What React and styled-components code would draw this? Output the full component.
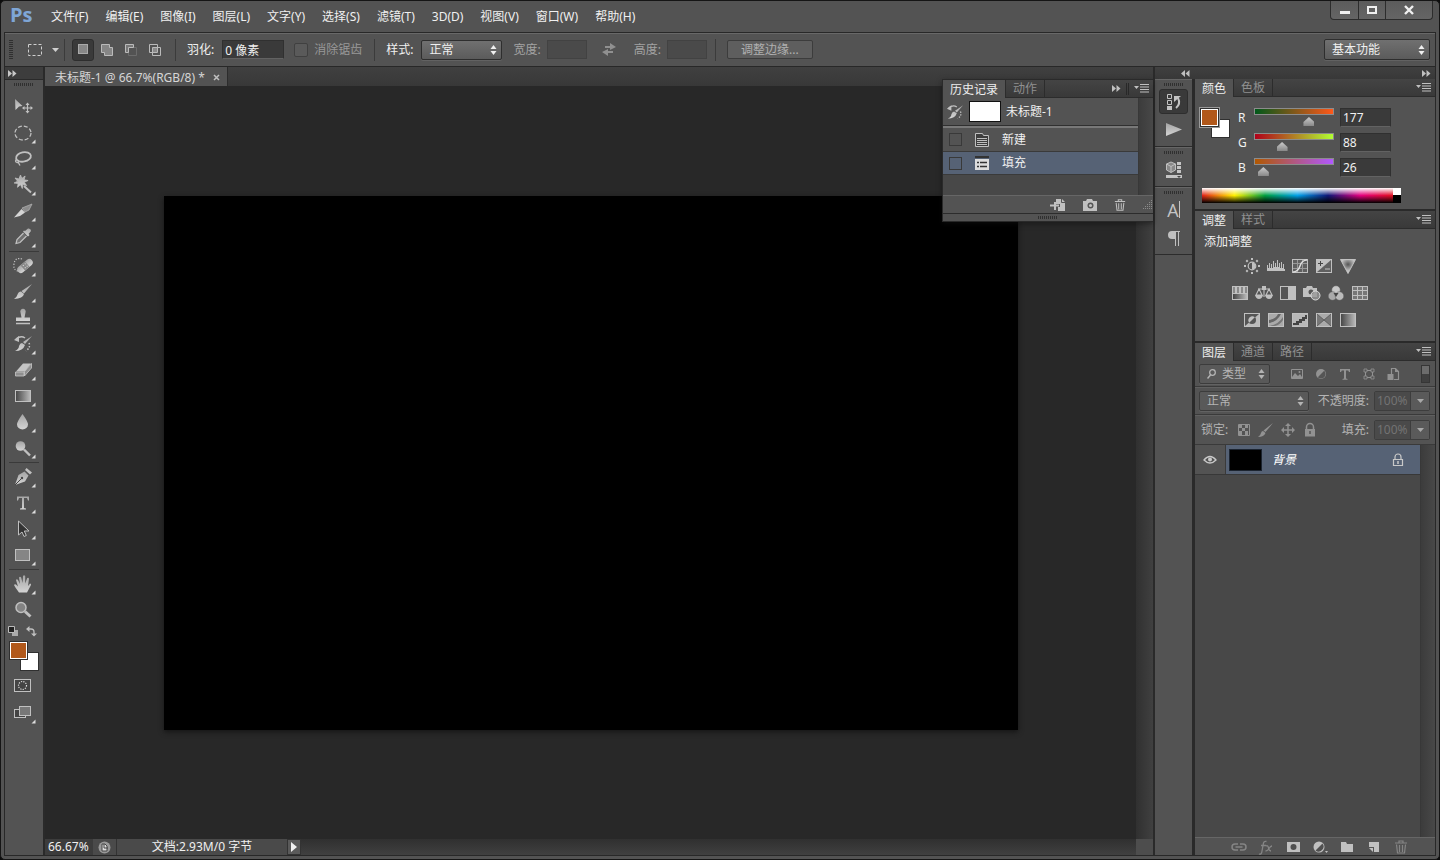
import React, { useState } from 'react';
import styled, { createGlobalStyle, css } from 'styled-components';

const MENUS = ['文件(F)', '编辑(E)', '图像(I)', '图层(L)', '文字(Y)', '选择(S)', '滤镜(T)', '3D(D)', '视图(V)', '窗口(W)', '帮助(H)'];

const SILVER = 'url(#silver)';
const LINE = '#c0c0c0';

const historyBrush = (
  <>
    <path d="M21 5 L14 13 L12 11 Z M11 12 L14 14 Q12 20 4 20 Q8 18 8 15 Q9 12 11 12Z" fill={SILVER} />
    <path d="M5 8 Q10 4 14 7" fill="none" stroke={LINE} strokeWidth="1.5" />
    <path d="M3 9 L8 5 L8 11Z" fill={LINE} />
    <path d="M18 12 Q20 16 15 20" fill="none" stroke={LINE} strokeWidth="1.5" strokeDasharray="1.5 1.5" />
  </>
);

const TOOLS = [
  [
    { name: '移动工具', flat: true, art: <><path d="M4 5 L11.5 12 L8 12.5 L4.5 16Z" fill={SILVER} /><path d="M16.5 9.5v9M12 14h9" stroke={LINE} strokeWidth="1.2" /><path d="M16.5 8.500l2 2.500h-4zM16.500 19.500l2-2.500h-4zM11 14l2.500-2v4zM22 14l-2.500-2v4z" fill={LINE} /></> },
    { name: '椭圆选框工具', art: <ellipse cx="12" cy="13" rx="8" ry="7" fill="none" stroke={LINE} strokeWidth="1.3" strokeDasharray="4 2" /> },
    { name: '套索工具', art: <><ellipse cx="12.500" cy="11" rx="7.500" ry="4.700" transform="rotate(-12 12 11)" fill="none" stroke={LINE} strokeWidth="1.8" /><path d="M6 13 Q3 15 6 16.500 Q9 17 7 14 M7 16 L9 19.500" fill="none" stroke={LINE} strokeWidth="1.300" /></> },
    { name: '魔棒工具', art: <><path d="M9.500 3l1.300 3.500 3.300-2.500-1 3.800 4 .7-3.800 1.700 2.300 3.300-3.800-1-.5 4-1.800-3.800-3 2.600.6-3.800-4-.5 3.500-1.800-2.600-3.200 3.900 1z" fill={SILVER} stroke="#bdbdbd" strokeWidth=".8" /><path d="M13 14l7 6.500" stroke={LINE} strokeWidth="2" /></> },
    { name: '切片工具', art: <><path d="M11 10L21 6L18 12L14 14Z" fill="#8b8b8b" stroke="#b5b5b5" strokeWidth=".7" /><path d="M10.500 11L14 14.500L9 18L3 19.500Z" fill="#d4d4d4" /></> },
    { name: '吸管工具', art: <><path d="M14 7L17 4.500Q20 4 20 7L17.500 10L18.500 11L17 12.500L12 7.500L13 6.500Z" fill={SILVER} /><path d="M12.500 9L6 15.500L5 19.500L9 18.500L15.500 12" fill="#707070" stroke={LINE} strokeWidth="1.200" /></> },
  ],
  [
    { name: '污点修复画笔工具', art: <><g transform="rotate(-40 14 13)"><rect x="5" y="9.500" width="18" height="7" rx="3.500" fill={SILVER} /><rect x="11" y="9.500" width="6" height="7" fill="#888" /><path d="M12.500 11.500h1M15 11.500h1M12.500 14.500h1M15 14.500h1" stroke="#e0e0e0" strokeWidth="1" /></g><path d="M11 6Q4 4 3 11Q2 17 7 18" fill="none" stroke={LINE} strokeWidth="1.200" strokeDasharray="1.200 1.500" /></> },
    { name: '画笔工具', art: <path d="M21 5L13 14.500L10.500 12Z M10 12.500L13 15Q12 19.500 3 20Q6 18 6.500 15.500Q7.500 12.500 10 12.500Z" fill={SILVER} /> },
    { name: '仿制图章工具', art: <><path d="M9.500 7.500a2.700 2.700 0 1 1 5 0L13.500 12.500H19V16H5v-3.500h5.500z" fill={SILVER} /><path d="M5 18.500h14" stroke={LINE} strokeWidth="1.500" /></> },
    { name: '历史记录画笔工具', art: historyBrush },
    { name: '橡皮擦工具', art: <><path d="M12 6.500h8l-6 8H5z" fill="#c4c4c4" /><path d="M4.500 15h8.500v4H4.500zM13.500 14.500L20.500 6.500v4.500l-7 8z" fill="#8f8f8f" stroke="#c8c8c8" strokeWidth=".8" /></> },
    { name: '渐变工具', art: <rect x="4.500" y="7.500" width="15" height="11" fill="url(#fade)" stroke={LINE} /> },
    { name: '模糊工具', art: <path d="M11.500 5Q17 12.500 17 15.500a5.500 5 0 0 1-11 0Q6 12.500 11.500 5Z" fill={SILVER} /> },
    { name: '减淡工具', art: <><circle cx="9.500" cy="11" r="4.800" fill={SILVER} /><path d="M13 14.500l6 6" stroke={LINE} strokeWidth="2.400" /></> },
  ],
  [
    { name: '钢笔工具', art: <><path d="M15.500 4L21 8.500l-2 2-5-4.500z" fill={LINE} /><path d="M13.500 7.500L17.500 11.500 14 17.500 4 21 7.500 11Z" fill={SILVER} /><path d="M4 21l6-6" stroke="#444" /><circle cx="11" cy="14" r="1.200" fill="#444" /></> },
    { name: '横排文字工具', art: <path d="M6 6.500h12v4h-1l-1-2.500h-3v10l2 .5v1H9v-1l2-.5V8H8l-1 2.500H6z" fill={SILVER} /> },
    { name: '路径选择工具', art: <path d="M7.500 5v14l3.500-3 2 4.500 2.300-1-2-4.500H18z" fill="#333" stroke={LINE} /> },
    { name: '矩形工具', art: <rect x="4.500" y="7.500" width="14" height="11" fill="#858585" stroke={LINE} /> },
  ],
  [
    { name: '抓手工具', art: <path d="M8 21.500Q4 16 3 14q1-1.500 3 .5l1 1L5 9q.8-1.500 2 0L9 13 8 6.500q1-1.500 2.200 0L11.500 12l.5-7q1-1.500 2.200 0v7.500l2-5.500q1.500-.8 1.800.7L17 15l2-2.500q1.500 0 1 1.500L16 21.500z" fill={SILVER} /> },
    { name: '缩放工具', flat: true, art: <><circle cx="10" cy="10.500" r="5" fill="#838383" stroke={LINE} strokeWidth="1.500" /><path d="M14 14.500l5.500 5" stroke={LINE} strokeWidth="3" /></> },
  ],
];

const ADJUSTMENTS = [
  [
    ['亮度/对比度', <><circle cx="9" cy="8" r="3.800" fill="none" stroke={LINE} strokeWidth="1.200" /><path d="M9 4.500a3.500 3.500 0 0 1 0 7z" fill={LINE} /><path d="M9 0v2M9 14v2M1 8h2M15 8h2M3.300 2.300l1.400 1.400M13.300 12.300l1.400 1.400M14.700 2.300l-1.400 1.400M4.700 12.300l-1.400 1.400" stroke={LINE} strokeWidth="2" /></>],
    ['色阶', <path d="M0 13V7h1v3h1V5h1v5h1V6h1v4h1V3h1v6h1V5h1v4h1V2h1v7h1V5h1v5h1V4h1v6h1V6h1v5h1v2z" fill={LINE} />],
    ['曲线', <><rect x="1.500" y="1.500" width="15" height="13" fill="#606060" stroke={LINE} /><path d="M6.500 2v12M11.500 2v12M2 5.500h14M2 10.500h14" stroke="#999" /><path d="M2 14Q7 14 9 8t7-6" fill="none" stroke="#ddd" strokeWidth="1.500" /></>],
    ['曝光度', <><rect x="1" y="1" width="16" height="14" fill={LINE} /><path d="M16 14V2L2 14z" fill="#606060" /><path d="M3 5.500h5M5.500 3v5" stroke="#444" /><path d="M10 11h5" stroke={LINE} /></>],
    ['自然饱和度', <path d="M1.500 1.500h15L9 15.500z" fill="url(#well)" stroke={LINE} />],
  ],
  [
    ['色相/饱和度', <><rect x="1" y="1" width="16" height="14" fill={LINE} /><path d="M3 2v6M7 2v6M11 2v6M15 2v6" stroke="#777" strokeWidth="1.500" /><rect x="2" y="9" width="14" height="5" fill="url(#fade)" /></>],
    ['色彩平衡', <><path d="M9 1v11M3 4h12M4 4l-3 6h6zM14 4l-3 6h6z" fill="none" stroke={LINE} strokeWidth="1.100" /><path d="M0 10h8q-1 4-4 4t-4-4zM10 10h8q-1 4-4 4t-4-4zM7 1h4v4H7z" fill={LINE} /></>],
    ['黑白', <><rect x="1.500" y="1.500" width="15" height="13" fill="#555" stroke={LINE} /><path d="M9 2h7v12H9z" fill={LINE} /></>],
    ['照片滤镜', <><path d="M0 3h3l1-2h5l1 2h4v9H0z" fill={LINE} /><circle cx="8" cy="7" r="2.500" fill="#555" /><circle cx="12.500" cy="10.500" r="4.500" fill="#999" fillOpacity=".8" stroke="#ddd" /></>],
    ['通道混合器', <><circle cx="9" cy="5" r="4.300" fill="#c8c8c8" stroke="#555" strokeWidth=".5" /><circle cx="5.500" cy="11" r="4.300" fill="#aaa" stroke="#555" strokeWidth=".5" /><circle cx="12.500" cy="11" r="4.300" fill="#bbb" stroke="#555" strokeWidth=".5" /><path d="M9 12L6.500 8h5z" fill="#444" /></>],
    ['颜色查找', <><rect x="1.500" y="1.500" width="15" height="13" fill="#777" stroke={LINE} /><path d="M6.500 2v12M11.500 2v12M2 5.500h14M2 10.500h14" stroke={LINE} /></>],
  ],
  [
    ['反相', <><rect x="1.500" y="1.500" width="15" height="13" fill="#bbb" stroke={LINE} /><path d="M2 14V2h14z" fill="#555" /><circle cx="9" cy="8" r="4" fill="#555" /><path d="M11.800 5.200a4 4 0 0 0-5.600 5.600z" fill={LINE} /></>],
    ['色调分离', <><rect x="1.500" y="1.500" width="15" height="13" fill="#aaa" stroke={LINE} /><path d="M2 8Q9 7 11 2h3Q10 10 2 11z" fill="#666" /><path d="M2 14Q11 13 16 5v3q-3 5-8 6z" fill="#777" /></>],
    ['阈值', <><rect x="1.500" y="1.500" width="15" height="13" fill="#b8b8b8" stroke={LINE} /><path d="M2 11h3V9h3V7h3V5h3V3h2v4h-2v2h-3v2H8v2H2z" fill="#444" /></>],
    ['可选颜色', <><rect x="1.500" y="1.500" width="15" height="13" fill="#777" stroke={LINE} /><path d="M2 2h14L9 8zM2 14h14L9 8z" fill="#aaa" /><path d="M2 2l14 12M16 2L2 14" stroke="#555" strokeWidth=".8" /></>],
    ['渐变映射', <rect x="1.500" y="1.500" width="15" height="13" fill="url(#fade)" stroke={LINE} />],
  ],
];

const CHANNELS = [
  { name: 'R', value: 177, from: '#00581a', to: '#ff581a' },
  { name: 'G', value: 88, from: '#b1001a', to: '#b1ff32' },
  { name: 'B', value: 26, from: '#b15800', to: '#b158ff' },
];

const brushArt = <path d="M15 1L7.500 10L5.500 8.500ZM5 9L7.500 11Q6 15 0 15Q2.500 13.500 3 11Q3.500 9 5 9Z" />;
const lockArt = <><path d="M4.500 7V5a3.500 3.500 0 0 1 7 0v2" fill="none" stroke="currentColor" strokeWidth="1.500" /><path d="M3 7h10v7.500H3z" /><path d="M8 9v3" stroke="#555" strokeWidth="1.500" /></>;
const lockOutline = <><path d="M5 7V5a3 3 0 0 1 6 0v2M3.500 7.500h9v6h-9z" fill="none" stroke="currentColor" strokeWidth="1.200" /><path d="M8 9v3" stroke="currentColor" strokeWidth="1.500" /></>;
const trashArt = <path d="M2 4h12M6 4V2h4v2M3.500 5.500l1 8.500h7l1-8.500M6.500 6v7M9.500 6v7" fill="none" stroke="currentColor" strokeWidth="1.200" />;

const FILTERS = [
  ['像素图层', <><path d="M2.500 3.500h11v9h-11z" fill="none" stroke="currentColor" /><path d="M3 11l3-4 3 3 2-2 2 3v1H3z" /><circle cx="10.500" cy="6" r="1" /></>],
  ['调整图层', <><circle cx="8" cy="8" r="5" /><path d="M4.800 11.200a4.500 4.500 0 0 0 6.400-6.400z" fill="#555" /></>],
  ['文字图层', <path d="M3 3h10v3h-1l-.8-1.500H9v8l1.500.5v.8h-5V13L7 12.500v-8H4.800L4 6H3z" />],
  ['形状图层', <><path d="M4.500 4.500h7v7h-7z" fill="none" stroke="currentColor" /><path d="M3 3h3v3H3zM10 3h3v3h-3zM3 10h3v3H3zM10 10h3v3h-3z" fill="#555" stroke="currentColor" strokeWidth=".8" /></>],
  ['智能对象', <><path d="M6.500 8V2.500h4l3 3v8H9" fill="none" stroke="currentColor" strokeWidth="1.200" /><path d="M10 2v4h4M2.500 8h6v6h-6z" /></>],
];

const LAYER_ACTIONS = [
  ['链接图层', true, <path d="M7 5H4a3 3 0 0 0 0 6h3M9 5h3a3 3 0 0 1 0 6H9M4.500 8h7" fill="none" stroke="currentColor" strokeWidth="1.500" />],
  ['图层样式', true, <path d="M1 15q2.500 1 3-3L5.500 4Q6 2 8.500 2.500M3 6.500h5M8 7q2-1 2.500 2T13 12M14 7q-1.500 0-3 2.500T7.500 12" fill="none" stroke="currentColor" strokeWidth="1.300" />],
  ['添加蒙版', false, <><path d="M2 3h13v10H2z" /><circle cx="8.500" cy="8" r="3" fill="#505050" /></>],
  ['新建调整图层', false, <><circle cx="7" cy="8" r="5.500" /><path d="M3.500 11.500a5 5 0 0 0 7-7z" fill="#505050" /><path d="M13 12h3l-1.500 2z" /></>],
  ['新建组', false, <path d="M2 3h5l1 2h6v8H2z" />],
  ['新建图层', false, <path d="M3 3h10v10H8V8H3zM3 9h4v4z" />],
  ['删除图层', true, trashArt],
];

const DoubleArrow = ({ left }) => (
  <Glyph $w={9} $h={7} viewBox="0 0 9 7">
    <path d={left ? 'M4 0v7L0 3.500zM8.500 0v7l-4-3.500z' : 'M0 0l4 3.500L0 7zM4.500 0l4 3.500-4 3.500z'} />
  </Glyph>
);

const Stepper = () => (
  <Glyph $w={7} $h={10} viewBox="0 0 7 10">
    <path d="M3.500 0L6.500 4h-6zM3.500 10L.500 6h6z" />
  </Glyph>
);

const Caret = () => (
  <Glyph $w={7} $h={4} viewBox="0 0 7 4"><path d="M0 0h7L3.500 4z" /></Glyph>
);

const PanelMenu = () => (
  <PlainButton aria-label="面板菜单">
    <Glyph $w={15} $h={9} viewBox="0 0 15 9">
      <path d="M0 2h5L2.500 5zM6 0h9v1H6zM6 2.500h9v1H6zM6 5h9v1H6zM6 7.500h9v1H6z" />
    </Glyph>
  </PlainButton>
);

function Dropdown({ label, options, icon, ...rest }) {
  return (
    <SelectShell {...rest}>
      {icon}
      <select aria-label={label}>
        {options.map((o) => <option key={o}>{o}</option>)}
      </select>
      <Stepper />
    </SelectShell>
  );
}

function PercentBox({ id, label }) {
  return (
    <Percent>
      <label htmlFor={id}>{label}</label>
      <div>
        <input id={id} defaultValue="100%" disabled />
        <button aria-label={`${label}选项`} disabled><Caret /></button>
      </div>
    </Percent>
  );
}

function Tabs({ names, children }) {
  return (
    <TabRow>
      {names.map((n, i) => <Tab key={n} $active={i === 0}>{n}</Tab>)}
      <Spacer />
      {children}
      <PanelMenu />
    </TabRow>
  );
}

function OptionsBar() {
  return (
    <Options>
      <VerticalGrip />
      <ToolPreset aria-label="工具预设">
        <Glyph $w={16} $h={14} viewBox="0 0 16 14"><path d="M1.500 1.500h13v11h-13z" fill="none" stroke="currentColor" strokeDasharray="3 2" /></Glyph>
        <Caret />
      </ToolPreset>
      <Divider />
      <ModeGroup>
        <ModeButton aria-label="新选区" $pressed>
          <svg viewBox="0 0 14 14"><rect x="2.500" y="1.500" width="9" height="9" fill="#888" stroke="#aaa" /></svg>
        </ModeButton>
        <ModeButton aria-label="添加到选区">
          <svg viewBox="0 0 14 14"><path d="M1.500 1.500h8v3h3v8h-8v-3h-3z" fill="#868686" stroke="#bbb" /></svg>
        </ModeButton>
        <ModeButton aria-label="从选区减去">
          <svg viewBox="0 0 14 14"><path d="M4.500 4.500h8v8h-8z" fill="none" stroke="#6c6c6c" /><path d="M1.500 1.500h8v3h-5v5h-3z" fill="#777" stroke="#bbb" /></svg>
        </ModeButton>
        <ModeButton aria-label="与选区交叉">
          <svg viewBox="0 0 14 14"><path d="M1.500 1.500h8v8h-8zM4.500 4.500h8v8h-8z" fill="none" stroke="#bbb" /><path d="M5 5h4v4H5z" fill="#8b8b8b" /></svg>
        </ModeButton>
      </ModeGroup>
      <Divider />
      <Field>
        <label htmlFor="feather">羽化:</label>
        <TextInput id="feather" defaultValue="0 像素" $w={62} />
      </Field>
      <CheckField>
        <input type="checkbox" id="antialias" disabled />
        <label htmlFor="antialias">消除锯齿</label>
      </CheckField>
      <Divider />
      <Field>
        <span>样式:</span>
        <Dropdown label="样式" options={['正常', '固定比例', '固定大小']} $w={81} />
      </Field>
      <Field $dim>
        <label htmlFor="width">宽度:</label>
        <TextInput id="width" $w={40} disabled />
      </Field>
      <SwapButton aria-label="高度和宽度互换" disabled>
        <Glyph $w={14} $h={13} viewBox="0 0 14 13"><path d="M3 3h5V0l6 4-6 3V5H3zM11 8H6V6L0 9l6 4v-3h5z" /></Glyph>
      </SwapButton>
      <Field $dim>
        <label htmlFor="height">高度:</label>
        <TextInput id="height" $w={40} disabled />
      </Field>
      <Divider $lead={8} />
      <RefineButton disabled>调整边缘...</RefineButton>
      <Spacer />
      <Dropdown label="工作区" options={['基本功能', '绘画', '摄影']} $w={106} $h={21} />
    </Options>
  );
}

function ToolPalette() {
  return (
    <Palette>
      <PaletteHead aria-label="展开面板"><DoubleArrow /></PaletteHead>
      <Grip />
      {TOOLS.map((group) => (
        <ToolGroup key={group[0].name}>
          {group.map((tool) => (
            <ToolButton key={tool.name} title={tool.name} aria-label={tool.name}>
              <svg viewBox="0 0 26 26">
                {tool.art}
                {!tool.flat && <path d="M24.500 19.500v4h-4z" fill="#ddd" />}
              </svg>
            </ToolButton>
          ))}
        </ToolGroup>
      ))}
      <SwatchActions>
        <PlainButton aria-label="默认前景色和背景色">
          <Glyph $w={11} $h={11} viewBox="0 0 11 11"><path d="M4 4h6v6H4z" fill="#aaa" /><path d="M.5.500h6v6h-6z" fill="#222" stroke="#bbb" /></Glyph>
        </PlainButton>
        <PlainButton aria-label="切换前景色和背景色">
          <Glyph $w={11} $h={11} viewBox="0 0 11 11"><path d="M2 3h3q3 0 3 3v2" fill="none" stroke="currentColor" strokeWidth="1.300" /><path d="M0 3l3.500-3v6zM8 10.500L5 7.500h6z" /></Glyph>
        </PlainButton>
      </SwatchActions>
      <Swatches $tool><i /><b /></Swatches>
      <ToolFoot>
        <ToolButton aria-label="快速蒙版">
          <svg viewBox="0 0 26 26"><rect x="3.500" y="7.500" width="16" height="12" fill="#444" stroke={LINE} /><circle cx="11.500" cy="13.500" r="4" fill="none" stroke="#ddd" strokeWidth="1.200" strokeDasharray="1.200 1.200" /></svg>
        </ToolButton>
        <ToolButton aria-label="屏幕模式">
          <svg viewBox="0 0 26 26"><rect x="3.500" y="9.500" width="11" height="8" fill="#444" stroke={LINE} /><rect x="8.500" y="6.500" width="11" height="9" fill="#777" stroke={LINE} /><path d="M24.500 19.500v4h-4z" fill="#ddd" /></svg>
        </ToolButton>
      </ToolFoot>
    </Palette>
  );
}

function HistoryPanel() {
  const [current, setCurrent] = useState('填充');
  return (
    <History>
      <Tabs names={['历史记录', '动作']}>
        <PlainButton aria-label="折叠"><DoubleArrow /></PlainButton>
        <TinyBar />
      </Tabs>
      <HistoryBody>
        <div>
          <Snapshot>
            <Glyph $w={18} $h={18} viewBox="2 3 20 19">{historyBrush}</Glyph>
            <SnapshotThumb />
            未标题-1
          </Snapshot>
          <State $active={current === '新建'} onClick={() => setCurrent('新建')}>
            <Mark />
            <Glyph $w={16} $h={16} viewBox="0 0 16 16"><path d="M1.500 1.500h7l1 2h5v11h-13z" fill="#3e3e3e" stroke={LINE} /><path d="M3 6.500h10M3 8.500h10M3 10.500h10M3 12.500h10" stroke={LINE} /></Glyph>
            新建
          </State>
          <State $active={current === '填充'} onClick={() => setCurrent('填充')}>
            <Mark />
            <Glyph $w={16} $h={16} viewBox="0 0 16 16"><path d="M1 1h14v2H1z" fill="#333" /><path d="M1 4h14v11H1z" fill="#ddd" /><path d="M3 7.500h2M6 7.500h7M3 11.500h2M6 11.500h7" stroke="#333" strokeWidth="1.500" /></Glyph>
            填充
          </State>
        </div>
        <Gutter />
      </HistoryBody>
      <HistoryFoot>
        <PlainButton aria-label="从当前状态创建新文档">
          <Glyph $w={16} $h={14} viewBox="0 0 16 14"><path d="M6 1h6l3 3v9H8V9h2V6H6z" /><path d="M0 7.500h9M5 4v8" stroke="currentColor" strokeWidth="2" /><path d="M11.500 1v3.500H15" fill="none" stroke="#555" /></Glyph>
        </PlainButton>
        <PlainButton aria-label="创建新快照">
          <Glyph $w={16} $h={14} viewBox="0 0 16 14"><path d="M1 3h3l1-2h5l1 2h4v10H1z" /><circle cx="8.500" cy="7.500" r="3" fill="#555" /><circle cx="8.500" cy="7.500" r="1.500" /></Glyph>
        </PlainButton>
        <PlainButton aria-label="删除当前状态"><Glyph $w={12} $h={12} viewBox="1 1 14 14">{trashArt}</Glyph></PlainButton>
        <Glyph $w={10} $h={10} viewBox="0 0 10 10"><path d="M9.500 0v10M7.500 2v8M5.500 4v6M3.500 6v4M1.500 8v2" stroke="#8a8a8a" strokeDasharray="1 1" /></Glyph>
      </HistoryFoot>
      <PanelEdge><Grip /></PanelEdge>
    </History>
  );
}

function DocumentArea() {
  return (
    <Doc>
      <DocTabs>
        <DocTab>未标题-1 @ 66.7%(RGB/8) *
          <PlainButton aria-label="关闭文档">
            <Glyph $w={7} $h={7} viewBox="0 0 7 7"><path d="M1 1l5 5M6 1L1 6" stroke="currentColor" strokeWidth="1.500" /></Glyph>
          </PlainButton>
        </DocTab>
      </DocTabs>
      <Stage>
        <Pasteboard><Canvas /></Pasteboard>
        <VScroll />
      </Stage>
      <StatusBar>
        <Zoom aria-label="缩放" defaultValue="66.67%" />
        <StatusIcon>
          <Glyph $w={13} $h={13} viewBox="0 0 13 13"><circle cx="6.500" cy="6.500" r="6" fill="#999" /><path d="M4 3h3l2 2v5H4z" fill="#ddd" stroke="#444" /><path d="M6 3v4h4" fill="none" stroke="#444" /></Glyph>
        </StatusIcon>
        <DocSize>文档:2.93M/0 字节</DocSize>
        <StatusMore aria-label="状态栏选项"><Glyph $w={6} $h={10} viewBox="0 0 6 10"><path d="M0 0l6 5-6 5z" /></Glyph></StatusMore>
        <Spacer />
        <Corner />
      </StatusBar>
      <HistoryPanel />
    </Doc>
  );
}

function IconDock() {
  return (
    <Dock>
      <DockGroup>
        <Grip />
        <DockButton aria-label="历史记录" $pressed>
          <Glyph $w={18} $h={18} viewBox="0 0 18 18"><path d="M2.500 1.500h4v4h-4zM2.500 7.500h4v4h-4z" fill="none" stroke="currentColor" /><path d="M2 13h5v4H2z" /><path d="M11 15q5-4 2-10" fill="none" stroke="currentColor" strokeWidth="2" /><path d="M9 3h7l-7 6z" /></Glyph>
        </DockButton>
        <DockButton aria-label="动作">
          <Glyph $w={18} $h={18} viewBox="0 0 18 18"><path d="M1 2l16 6.500L1 15z" fill={SILVER} /></Glyph>
        </DockButton>
      </DockGroup>
      <DockGroup>
        <Grip />
        <DockButton aria-label="属性">
          <Glyph $w={18} $h={18} viewBox="0 0 18 18"><path d="M6 1l4.500 2v6L6 11.500 1.500 9V3z" fill="#888" stroke={LINE} /><path d="M1.500 3L6 5.500 10.500 3M6 5.500v6" fill="none" stroke={LINE} /><path d="M12 1h4v3h-4zM12 5h4v3h-4zM12 9h4v3h-4zM1 14h16v3H1z" /><path d="M12 15h4l-2 2z" fill="#444" /></Glyph>
        </DockButton>
      </DockGroup>
      <DockGroup>
        <Grip />
        <DockButton aria-label="字符"><DockLetter>A</DockLetter><TextCursor /></DockButton>
        <DockButton aria-label="段落">
          <Glyph $w={18} $h={18} viewBox="0 0 18 18"><path d="M7 2h8v1h-1v14h-1V3h-2v14h-1V10H7a4 4 0 0 1 0-8z" fill={LINE} /></Glyph>
        </DockButton>
      </DockGroup>
    </Dock>
  );
}

function ColorPanel() {
  const [rgb, setRgb] = useState(CHANNELS.map((c) => c.value));
  const change = (i, v) => setRgb(rgb.map((old, n) => (n === i ? Number(v) || 0 : old)));
  return (
    <Panel>
      <Tabs names={['颜色', '色板']} />
      <ColorBody>
        <Swatches><i /><b /></Swatches>
        <Sliders>
          {CHANNELS.map((c, i) => (
            <Channel key={c.name}>
              <label htmlFor={`ch-${c.name}`}>{c.name}</label>
              <Track $from={c.from} $to={c.to}>
                <input type="range" min="0" max="255" aria-label={c.name} value={rgb[i]} onChange={(e) => change(i, e.target.value)} />
              </Track>
              <ChannelInput id={`ch-${c.name}`} value={rgb[i]} onChange={(e) => change(i, e.target.value)} />
            </Channel>
          ))}
        </Sliders>
      </ColorBody>
      <Spectrum><span /><i /></Spectrum>
    </Panel>
  );
}

function AdjustmentsPanel() {
  return (
    <Panel>
      <Tabs names={['调整', '样式']} />
      <AdjustTitle>添加调整</AdjustTitle>
      <AdjustRows>
        {ADJUSTMENTS.map((row) => (
          <AdjustRow key={row[0][0]}>
            {row.map(([name, art]) => (
              <AdjustButton key={name} title={name} aria-label={name}>
                <Glyph $w={18} $h={16} viewBox="0 0 18 16">{art}</Glyph>
              </AdjustButton>
            ))}
          </AdjustRow>
        ))}
      </AdjustRows>
    </Panel>
  );
}

function LayersPanel() {
  return (
    <Panel $grow>
      <Tabs names={['图层', '通道', '路径']} />
      <LayerBar $h={26}>
        <Dropdown
          label="过滤类型"
          options={['类型', '名称', '效果']}
          icon={<Glyph $w={9} $h={10} viewBox="0 0 9 10"><circle cx="5.500" cy="3.500" r="2.800" fill="none" stroke="currentColor" strokeWidth="1.300" /><path d="M3.500 6L.500 9.500" stroke="currentColor" strokeWidth="1.500" /></Glyph>}
          $w={71}
          $flat
        />
        <FilterIcons>
          {FILTERS.map(([name, art]) => (
            <PlainButton key={name} aria-label={name}><Glyph $w={16} $h={16} viewBox="0 0 16 16">{art}</Glyph></PlainButton>
          ))}
        </FilterIcons>
        <FilterToggle aria-label="图层过滤开关" />
      </LayerBar>
      <LayerBar $h={28}>
        <Dropdown label="混合模式" options={['正常', '溶解', '变暗']} $w={110} $flat />
        <PercentBox id="opacity" label="不透明度:" />
      </LayerBar>
      <LayerBar $h={30}>
        <LockLabel>锁定:</LockLabel>
        <LockIcons>
          <PlainButton aria-label="锁定透明像素"><Glyph $w={16} $h={16} viewBox="0 0 16 16"><path d="M2.500 2.500h11v11h-11z" fill="none" stroke="currentColor" /><path d="M3 3h3v3H3zM9 3h3v3H9zM6 6h3v3H6zM3 9h3v4H3zM9 9h3v4H9z" /></Glyph></PlainButton>
          <PlainButton aria-label="锁定图像像素"><Glyph $w={16} $h={16} viewBox="0 0 16 16">{brushArt}</Glyph></PlainButton>
          <PlainButton aria-label="锁定位置"><Glyph $w={16} $h={16} viewBox="0 0 16 16"><path d="M8 3v10M3 8h10" stroke="currentColor" strokeWidth="1.500" /><path d="M8 1l3 3H5zM8 15l3-3H5zM1 8l3-3v6zM15 8l-3-3v6z" /></Glyph></PlainButton>
          <PlainButton aria-label="锁定全部"><Glyph $w={16} $h={16} viewBox="0 0 16 16">{lockArt}</Glyph></PlainButton>
        </LockIcons>
        <PercentBox id="fill" label="填充:" />
      </LayerBar>
      <LayerList>
        <Layer>
          <EyeButton aria-label="指示图层可见性">
            <Glyph $w={14} $h={12} viewBox="0 0 14 12"><path d="M1 6q6-7 12 0q-6 6-12 0z" fill="none" stroke="currentColor" strokeWidth="1.300" /><circle cx="7" cy="5.500" r="2" /></Glyph>
          </EyeButton>
          <LayerInfo>
            <LayerThumb />
            <em>背景</em>
            <Spacer />
            <Glyph $w={16} $h={16} viewBox="0 0 16 16">{lockOutline}</Glyph>
          </LayerInfo>
        </Layer>
        <Gutter />
      </LayerList>
      <LayerFoot>
        {LAYER_ACTIONS.map(([name, dim, art]) => (
          <FootButton key={name} aria-label={name} $dim={dim}><Glyph $w={16} $h={16} viewBox="0 0 16 16">{art}</Glyph></FootButton>
        ))}
      </LayerFoot>
    </Panel>
  );
}

function App() {
  return (
    <Window>
      <GlobalStyle />
      <Defs aria-hidden="true">
        <linearGradient id="silver" x1="0" y1="0" x2="0" y2="1"><stop offset="0" stopColor="#a4a4a4" /><stop offset="1" stopColor="#d4d4d4" /></linearGradient>
        <linearGradient id="fade"><stop offset="0" stopColor="#444" /><stop offset="1" stopColor="#bbb" /></linearGradient>
        <radialGradient id="well" cy=".35"><stop offset="0" stopColor="#555" /><stop offset="1" stopColor="#ccc" /></radialGradient>
      </Defs>
      <MenuBar>
        <Logo>Ps</Logo>
        <Menu>{MENUS.map((m) => <MenuItem key={m}>{m}</MenuItem>)}</Menu>
        <WindowButtons>
          <button aria-label="最小化"><Glyph $w={10} $h={10} viewBox="0 0 10 10"><path d="M0 6h10v3H0z" /></Glyph></button>
          <button aria-label="最大化"><Glyph $w={10} $h={10} viewBox="0 0 10 10"><path d="M1 2h8v6H1z" fill="none" stroke="currentColor" strokeWidth="2" /></Glyph></button>
          <button aria-label="关闭"><Glyph $w={10} $h={10} viewBox="0 0 10 10"><path d="M1 1l8 8M9 1L1 9" stroke="currentColor" strokeWidth="2.400" /></Glyph></button>
        </WindowButtons>
      </MenuBar>
      <Frame>
        <OptionsBar />
        <Workspace>
          <ToolPalette />
          <DocumentArea />
          <Side>
            <SideHead>
              <PlainButton aria-label="展开面板"><DoubleArrow left /></PlainButton>
              <PlainButton aria-label="折叠为图标"><DoubleArrow /></PlainButton>
            </SideHead>
            <SideBody>
              <IconDock />
              <Panels>
                <ColorPanel />
                <AdjustmentsPanel />
                <LayersPanel />
              </Panels>
            </SideBody>
          </Side>
        </Workspace>
      </Frame>
    </Window>
  );
}

const GlobalStyle = createGlobalStyle`
  * { box-sizing: border-box; }
  body {
    margin: 0;
    background: #0c0c0c;
    color: #f0f0f0;
    font: 12px/16px 'Noto Sans', 'Noto Sans CJK SC', sans-serif;
  }
  button, input, select { font: inherit; color: inherit; margin: 0; padding: 0; }
  button { border: 0; background: none; }
`;

const pressed = css`
  background: #3a3a3a;
  border: 1px solid #2e2e2e;
  border-radius: 3px;
`;

const Window = styled.div`
  display: flex;
  flex-direction: column;
  height: 100vh;
  border: 1px solid #151515;
  border-radius: 5px;
  padding: 0 3px 3px;
  background: #535353;
  overflow: hidden;
`;

const Defs = styled.svg`
  position: absolute;
  width: 0;
  height: 0;
`;

const Glyph = styled.svg`
  display: block;
  flex: none;
  width: ${(p) => p.$w}px;
  height: ${(p) => p.$h}px;
  fill: currentColor;
`;

const Spacer = styled.div`
  flex: 1;
`;

const PlainButton = styled.button`
  display: flex;
  align-items: center;
  justify-content: center;
  color: #c0c0c0;
`;

const MenuBar = styled.header`
  display: flex;
  align-items: center;
  height: 31px;
  flex: none;
`;

const Logo = styled.strong`
  width: 40px;
  padding: 0 0 4px 6px;
  color: #7fa6d6;
  font: bold 20px/27px 'Open Sans', sans-serif;
`;

const Menu = styled.nav`
  display: flex;
  flex: 1;
`;

const MenuItem = styled.button`
  padding: 0 10px 0 7px;
  white-space: nowrap;
`;

const WindowButtons = styled.div`
  display: flex;
  align-self: flex-start;
  height: 19px;
  margin-right: 3px;
  border: 1px solid #2c2c2c;
  border-top: 0;
  border-radius: 0 0 4px 4px;
  background: linear-gradient(#5c5c5c, #656565);
  button {
    display: flex;
    align-items: center;
    justify-content: center;
    width: 27px;
  }
  button + button { border-left: 1px solid #2c2c2c; }
  button:last-child { width: 47px; }
`;

const Frame = styled.div`
  display: flex;
  flex-direction: column;
  flex: 1;
  min-height: 0;
  border: 1px solid #282828;
`;

const Options = styled.div`
  display: flex;
  align-items: center;
  flex: none;
  height: 34px;
  padding: 0 5px 1px 4px;
  border-top: 1px solid #686868;
  border-bottom: 1px solid #282828;
`;

const VerticalGrip = styled.i`
  width: 4px;
  height: 20px;
  background: repeating-linear-gradient(#303030 0 1px, #535353 1px 2px);
`;

const ToolPreset = styled.button`
  display: flex;
  align-items: center;
  gap: 9px;
  padding: 0 5px 0 14px;
  color: #d0d0d0;
`;

const Divider = styled.i`
  width: 1px;
  height: 22px;
  margin-left: ${(p) => p.$lead || 0}px;
  background: #3b3b3b;
`;

const ModeGroup = styled.div`
  display: flex;
  gap: 2px;
  padding: 0 9px 0 7px;
`;

const ModeButton = styled.button`
  display: flex;
  align-items: center;
  justify-content: center;
  width: 22px;
  height: 22px;
  ${(p) => p.$pressed && pressed}
  svg { width: 14px; height: 14px; flex: none; }
`;

const Field = styled.div`
  display: flex;
  align-items: center;
  gap: ${(p) => (p.$dim ? 6 : 8)}px;
  margin-left: 11px;
  color: ${(p) => (p.$dim ? '#a3a3a3' : '#f0f0f0')};
  white-space: nowrap;
`;

const TextInput = styled.input`
  width: ${(p) => p.$w}px;
  height: 19px;
  padding: 0 2px;
  border: 1px solid #303030;
  border-bottom-color: #626262;
  background: #3a3a3a;
  &:disabled { background: #4a4a4a; border-color: #424242; }
`;

const CheckField = styled.div`
  display: flex;
  align-items: center;
  gap: 6px;
  margin: 0 12px 0 10px;
  color: #989898;
  input {
    appearance: none;
    width: 14px;
    height: 14px;
    border: 1px solid #404040;
    border-radius: 2px;
    background: #5a5a5a;
  }
`;

const SelectShell = styled.div`
  display: flex;
  align-items: center;
  gap: 6px;
  flex: none;
  width: ${(p) => p.$w}px;
  height: ${(p) => p.$h || 20}px;
  padding: 0 4px 0 7px;
  border: 1px solid ${(p) => (p.$flat ? '#3c3c3c' : '#2e2e2e')};
  border-radius: 2px;
  background: ${(p) => (p.$flat ? '#595959' : 'linear-gradient(#707070, #5b5b5b)')};
  color: ${(p) => (p.$flat ? '#b4b4b4' : '#f0f0f0')};
  box-shadow: 0 1px 0 #626262;
  select {
    appearance: none;
    flex: 1;
    min-width: 0;
    border: 0;
    background: none;
  }
`;

const SwapButton = styled.button`
  margin: 0 7px 0 15px;
  color: #909090;
`;

const RefineButton = styled.button`
  width: 86px;
  height: 19px;
  margin-left: 11px;
  border: 1px solid #3c3c3c;
  border-radius: 2px;
  background: #5e5e5e;
  color: #b0b0b0;
`;

const Workspace = styled.div`
  display: flex;
  flex: 1;
  min-height: 0;
`;

const Palette = styled.aside`
  display: flex;
  flex-direction: column;
  align-items: center;
  flex: none;
  width: 38px;
`;

const PaletteHead = styled.button`
  align-self: stretch;
  flex: none;
  height: 13px;
  padding: 1px 3px;
  border-bottom: 1px solid #2a2a2a;
  background: #3d3d3d;
  color: #c8c8c8;
`;

const Grip = styled.i`
  flex: none;
  width: 20px;
  height: 3px;
  margin: 3px auto;
  background: repeating-linear-gradient(90deg, #303030 0 1px, #535353 1px 2px);
`;

const ToolGroup = styled.div`
  display: flex;
  flex-direction: column;
  padding-bottom: 1px;
  &:nth-of-type(1) { padding-top: 5px; }
  & + & { border-top: 1px solid #3a3a3a; padding-top: 1px; }
`;

const ToolButton = styled.button`
  display: flex;
  justify-content: center;
  width: 30px;
  height: 26px;
  svg { width: 26px; height: 26px; flex: none; }
`;

const SwatchActions = styled.div`
  display: flex;
  gap: 7px;
  padding: 2px 4px 4px 0;
`;

/* overlapping foreground / background pair */
const Swatches = styled.div`
  display: grid;
  flex: none;
  width: 30px;
  height: 30px;
  i, b {
    grid-area: 1 / 1;
    width: 19px;
    height: 19px;
    border: 1px solid #303030;
  }
  i { place-self: end; background: #fff; }
  b { background: #b1581a; box-shadow: inset 0 0 0 1px #fff; outline: ${(p) => (p.$tool ? 'none' : '1px solid #999')}; }
`;

const ToolFoot = styled.div`
  display: flex;
  flex-direction: column;
  gap: 2px;
  padding-top: 1px;
`;

const Doc = styled.main`
  position: relative;
  display: flex;
  flex-direction: column;
  flex: 1;
  min-width: 0;
  border: solid #2a2a2a;
  border-width: 0 2px;
`;

const DocTabs = styled.div`
  display: flex;
  flex: none;
  height: 19px;
  background: linear-gradient(#404040, #383838);
`;

const DocTab = styled.div`
  display: flex;
  align-items: center;
  gap: 8px;
  padding: 2px 7px 0 10px;
  border-right: 1px solid #2c2c2c;
  background: #535353;
  color: #d6d6d6;
`;

const Stage = styled.div`
  display: flex;
  flex: 1;
  min-height: 0;
`;

const Pasteboard = styled.div`
  display: flex;
  align-items: center;
  justify-content: center;
  flex: 1;
  min-width: 0;
  background: #282828;
`;

const Canvas = styled.div`
  width: 854px;
  max-width: 100%;
  aspect-ratio: 854 / 534;
  background: #000;
  box-shadow: 0 2px 5px #151515;
`;

const VScroll = styled.div`
  width: 17px;
  background: linear-gradient(90deg, #303030, #404040);
`;

const StatusBar = styled.footer`
  display: flex;
  flex: none;
  height: 16px;
  background: linear-gradient(#303030, #404040);
`;

const Zoom = styled.input`
  width: 48px;
  padding-left: 3px;
  border: 0;
  background: #3c3c3c;
`;

const StatusIcon = styled.span`
  display: flex;
  align-items: center;
  justify-content: center;
  width: 24px;
  border-right: 1px solid #333;
  background: #4a4a4a;
`;

const DocSize = styled.span`
  width: 170px;
  background: #4a4a4a;
  text-align: center;
`;

const StatusMore = styled.button`
  display: flex;
  align-items: center;
  justify-content: center;
  width: 14px;
  border: 1px solid #333;
  background: #5a5a5a;
`;

const Corner = styled.i`
  width: 17px;
  background: #4d4d4d;
`;

const History = styled.section`
  position: absolute;
  top: 12px;
  right: 0;
  width: 211px;
  border: 1px solid #2a2a2a;
  border-right: 0;
  background: #535353;
  box-shadow: 0 2px 5px #1118;
`;

const TabRow = styled.div`
  display: flex;
  align-items: center;
  gap: 5px;
  height: 18px;
  padding-right: 4px;
  border-bottom: 1px solid #2c2c2c;
  background: linear-gradient(#444, #393939);
`;

const Tab = styled.button`
  align-self: stretch;
  margin-right: -5px;
  padding: 1px 7px 0;
  border-right: 1px solid #2c2c2c;
  ${(p) => (p.$active
    ? 'background: #535353; color: #eee; margin-bottom: -1px;'
    : 'color: #909090;')}
`;

const TinyBar = styled.i`
  width: 3px;
  height: 12px;
  border: solid #282828;
  border-width: 0 1px;
`;

const HistoryBody = styled.div`
  display: flex;
  height: 97px;
  background: #484848;
  > div { flex: 1; }
`;

const Snapshot = styled.div`
  display: flex;
  align-items: center;
  gap: 5px;
  height: 28px;
  padding-left: 3px;
  border-bottom: 1px solid #303030;
  background: #535353;
  color: #f0f0f0;
`;

const SnapshotThumb = styled.i`
  width: 32px;
  height: 21px;
  border: 1px solid #111;
  background: #fff;
`;

const State = styled.button`
  display: flex;
  align-items: center;
  gap: 12px;
  width: 100%;
  height: 23px;
  padding-left: 6px;
  border-bottom: 1px solid #3a3a3a;
  background: ${(p) => (p.$active ? '#566275' : '#535353')};
  ${Snapshot} + & { height: 26px; border-top: 2px solid #787878; }
`;

const Mark = styled.i`
  width: 13px;
  height: 13px;
  border: 1px solid #393939;
`;

const Gutter = styled.i`
  width: 15px;
  flex: none;
  border-left: 1px solid #383838;
  background: linear-gradient(90deg, #3c3c3c, #484848);
`;

const HistoryFoot = styled.div`
  display: flex;
  align-items: center;
  justify-content: flex-end;
  gap: 16px;
  height: 18px;
  padding-right: 1px;
  border-top: 1px solid #666;
`;

const PanelEdge = styled.div`
  height: 8px;
  border-top: 1px solid #2c2c2c;
  display: flex;
  align-items: center;
`;

const Side = styled.aside`
  display: flex;
  flex-direction: column;
  flex: none;
  width: 280px;
`;

const SideHead = styled.div`
  display: flex;
  align-items: center;
  justify-content: space-between;
  height: 12px;
  padding: 0 4px 0 26px;
  background: linear-gradient(#404040, #383838);
`;

const SideBody = styled.div`
  display: flex;
  flex: 1;
  min-height: 0;
`;

const Dock = styled.nav`
  width: 40px;
  flex: none;
  border-right: 3px solid #2a2a2a;
`;

const DockGroup = styled.div`
  display: flex;
  flex-direction: column;
  align-items: center;
  gap: 3px;
  padding-bottom: 4px;
  border-top: 1px solid #666;
  border-bottom: 1px solid #2c2c2c;
  ${Grip} { margin: 3px auto 0; }
`;

const DockButton = styled.button`
  display: flex;
  align-items: center;
  justify-content: center;
  width: 29px;
  height: 25px;
  color: #c4c4c4;
  ${(p) => p.$pressed && pressed}
`;

const DockLetter = styled.span`
  font: 18px/20px 'Open Sans', sans-serif;
`;

const TextCursor = styled.i`
  width: 1px;
  height: 17px;
  background: #c4c4c4;
`;

const Panels = styled.div`
  display: flex;
  flex-direction: column;
  flex: 1;
  min-width: 0;
  gap: 2px;
  background: #2a2a2a;
`;

const Panel = styled.section`
  display: flex;
  flex-direction: column;
  flex: ${(p) => (p.$grow ? '1' : 'none')};
  min-height: 0;
  background: #535353;
`;

const ColorBody = styled.div`
  display: flex;
  gap: 8px;
  padding: 11px 44px 0 5px;
`;

const Sliders = styled.div`
  display: flex;
  flex-direction: column;
  gap: 6px;
  flex: 1;
`;

const Channel = styled.div`
  display: flex;
  align-items: center;
  gap: 6px;
  height: 19px;
  label { width: 10px; }
`;

const Track = styled.div`
  flex: 1;
  align-self: flex-start;
  height: 7px;
  border: 1px solid #8c8c8c;
  background: linear-gradient(90deg, ${(p) => p.$from}, ${(p) => p.$to});
  input {
    display: block;
    appearance: none;
    width: calc(100% + 10px);
    height: 16px;
    margin: 0 -5px;
    background: none;
  }
  input::-webkit-slider-thumb {
    appearance: none;
    width: 11px;
    height: 9px;
    margin-top: 9px;
    background: linear-gradient(#ccc, #888);
    clip-path: polygon(50% 0, 100% 55%, 100% 100%, 0 100%, 0 55%);
  }
`;

const ChannelInput = styled(TextInput)`
  width: 51px;
`;

const Spectrum = styled.div`
  display: flex;
  height: 15px;
  margin: 11px 34px 6px 7px;
  span {
    flex: 1;
    background:
      linear-gradient(#fff, #fff0 50%, #0000 50%, #000),
      linear-gradient(90deg, #e0201a, #fff000 17%, #00a040 33%, #00a0e8 50%, #101878 66%, #e4007f 83%, #e01020);
  }
  i {
    width: 8px;
    background: linear-gradient(#fff 50%, #000 50%);
  }
`;

const AdjustTitle = styled.h2`
  margin: 5px 9px 6px;
  font-size: 12px;
  line-height: 16px;
  font-weight: 400;
`;

const AdjustRows = styled.div`
  display: flex;
  flex-direction: column;
  gap: 11px;
  padding: 2px 30px 13px 0;
`;

const AdjustRow = styled.div`
  display: flex;
  justify-content: center;
  gap: 6px;
`;

const AdjustButton = styled.button`
  width: 18px;
  height: 16px;
`;

const LayerBar = styled.div`
  display: flex;
  align-items: center;
  flex: none;
  height: ${(p) => p.$h}px;
  padding: 0 5px 0 4px;
  border-bottom: 1px solid #3a3a3a;
  color: #b4b4b4;
  & + & { border-top: 1px solid #606060; }
`;

const FilterIcons = styled.div`
  display: flex;
  gap: 8px;
  flex: 1;
  padding-left: 19px;
  button { color: #929292; }
`;

const FilterToggle = styled.button`
  width: 9px;
  height: 18px;
  border: 1px solid #363636;
  background: linear-gradient(#6c6c6c 50%, #404040 50%);
`;

const Percent = styled.div`
  display: flex;
  align-items: center;
  gap: 5px;
  margin-left: auto;
  div {
    display: flex;
    height: 20px;
    border: 1px solid #3d3d3d;
    border-radius: 2px;
  }
  input {
    width: 35px;
    padding-left: 2px;
    border: 0;
    background: #4a4a4a;
    color: #737373;
  }
  button {
    display: flex;
    align-items: center;
    justify-content: center;
    width: 19px;
    border-left: 1px solid #3d3d3d;
    background: #5a5a5a;
    color: #a8a8a8;
  }
`;

const LockLabel = styled.span`
  padding: 0 8px 0 2px;
`;

const LockIcons = styled.div`
  display: flex;
  gap: 6px;
  button { color: #929292; }
`;

const LayerList = styled.div`
  display: flex;
  flex: 1;
  min-height: 0;
  background: #484848;
`;

const Layer = styled.div`
  display: flex;
  flex: 1;
  height: 30px;
  border-bottom: 1px solid #383838;
`;

const EyeButton = styled.button`
  display: flex;
  align-items: center;
  justify-content: center;
  width: 31px;
  border-right: 1px solid #3a3a3a;
  background: #535353;
  color: #c8c8c8;
`;

const LayerInfo = styled.div`
  display: flex;
  align-items: center;
  flex: 1;
  gap: 10px;
  padding: 0 14px 0 3px;
  background: #566275;
  color: #fff;
  svg { color: #c8c8c8; }
`;

const LayerThumb = styled.i`
  width: 33px;
  height: 22px;
  border: 1px solid #1c2430;
  background: #000;
`;

const LayerFoot = styled.footer`
  display: flex;
  align-items: center;
  justify-content: flex-end;
  gap: 11px;
  flex: none;
  height: 18px;
  padding-right: 26px;
  border-top: 1px solid #666;
`;

const FootButton = styled(PlainButton)`
  color: ${(p) => (p.$dim ? '#858585' : '#c0c0c0')};
`;

export default App;
